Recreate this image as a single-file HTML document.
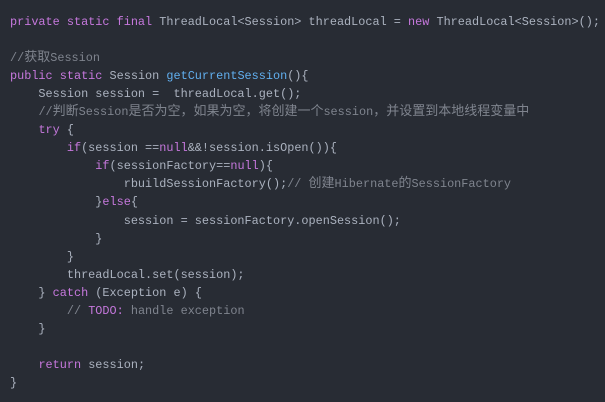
<!DOCTYPE html>
<html><head><meta charset="utf-8"><style>
html,body{margin:0;padding:0;background:#282c34;width:605px;height:402px;overflow:hidden}
pre{margin:0;position:absolute;left:10px;top:13px;font-family:"Liberation Mono","Noto Sans CJK SC",monospace;font-size:11.85px;line-height:18.05px;color:#abb2bf;white-space:pre}
.k{color:#c678dd}.f{color:#61afef}.c{color:#7f848e}
.z{font-family:"Noto Sans CJK SC",sans-serif;font-size:13px;letter-spacing:0;line-height:10px}
</style></head><body><pre><span class="k">private static final</span> ThreadLocal&lt;Session&gt; threadLocal = <span class="k">new</span> ThreadLocal&lt;Session&gt;();

<span class="c">//<span class="z">获取</span>Session</span>
<span class="k">public static</span> Session <span class="f">getCurrentSession</span>(){
    Session session =  threadLocal.get();
    <span class="c">//<span class="z">判断</span>Session<span class="z">是否为空，如果为空，将创建一个</span>session<span class="z">，并设置到本地线程变量中</span></span>
    <span class="k">try</span> {
        <span class="k">if</span>(session ==<span class="k">null</span>&amp;&amp;!session.isOpen()){
            <span class="k">if</span>(sessionFactory==<span class="k">null</span>){
                rbuildSessionFactory();<span class="c">// <span class="z">创建</span>Hibernate<span class="z">的</span>SessionFactory</span>
            }<span class="k">else</span>{
                session = sessionFactory.openSession();
            }
        }
        threadLocal.set(session);
    } <span class="k">catch</span> (Exception e) {
        <span class="c">// <span class="k">TODO:</span> handle exception</span>
    }

    <span class="k">return</span> session;
}</pre></body></html>
